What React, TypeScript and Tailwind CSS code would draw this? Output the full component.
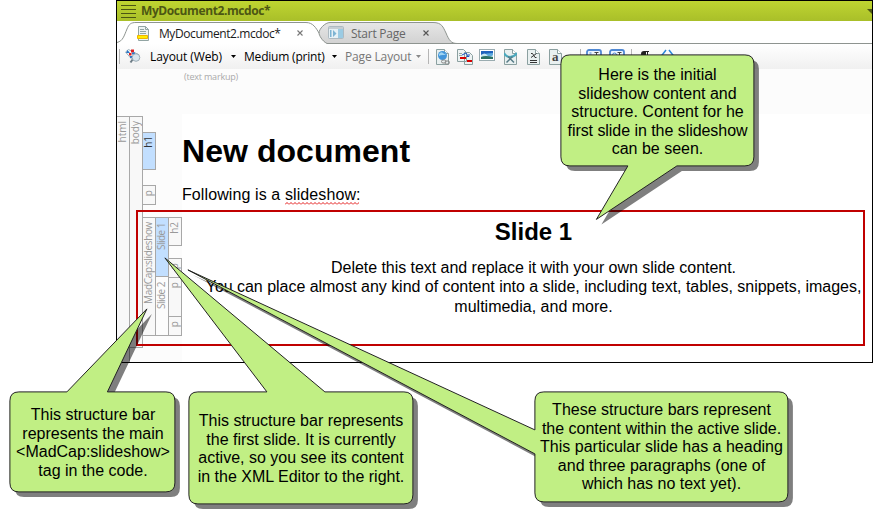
import type { ReactNode } from "react";

const sans = "font-['Liberation_Sans',Arial,sans-serif]";
const ui = "font-['Open_Sans','Noto_Sans',sans-serif]";

function Page({ children }: { children?: ReactNode }) {
  return (
    <>
      <path d="M.5.5h8l4 4v11h-12z" fill="#e9f0f0" stroke="#8ba0a0" />
      <path d="M8.5.5v4h4" fill="#fff" stroke="#8ba0a0" />
      {children}
    </>
  );
}

function Caret({ dim = false }: { dim?: boolean }) {
  return (
    <svg className="shrink-0" width="5" height="3" viewBox="0 0 5 3">
      <path d="M0 0h5L2.5 3z" fill={dim ? "#888" : "#000"} />
    </svg>
  );
}

function Separator() {
  return <div className="h-[15px] w-px shrink-0 bg-[#b5b5b5]" />;
}

function TitleBar() {
  return (
    <div className="flex h-5 shrink-0 items-center bg-linear-to-b from-[#bfd531] to-[#a9bf29]">
      <div className="ml-1 flex w-[15px] flex-col gap-[3px]">
        <div className="h-px bg-[#4c5613]" />
        <div className="h-px bg-[#4c5613]" />
        <div className="h-px bg-[#4c5613]" />
        <div className="h-px bg-[#4c5613]" />
      </div>
      <span className={`${ui} ml-[5px] whitespace-nowrap text-[12px] leading-5 font-bold tracking-[-0.4px] text-[#4c5613]`}>
        MyDocument2.mcdoc*
      </span>
      <svg className="ml-auto" width="5" height="5" viewBox="0 0 5 5">
        <path d="M0 0h5v5z" fill="#4c5613" />
      </svg>
    </div>
  );
}

function TabStrip() {
  return (
    <div className="relative flex h-[23px] shrink-0 items-center bg-white">
      <svg className="absolute top-0 left-0" width="755" height="24" viewBox="0 0 755 24">
        <defs>
          <linearGradient id="idleTab" x1="0" y1="0" x2="0" y2="1">
            <stop offset="0" stopColor="#e6e6e6" />
            <stop offset="1" stopColor="#d2d2d2" />
          </linearGradient>
        </defs>
        <path d="M209.500 22.500C204 19 202 14 202 12C202 8 208 1.500 213 1.500H316C325 1.500 326 6 329 12C332 19 334 22.500 340 22.500z" fill="url(#idleTab)" />
        <path d="M755 22.500H210C205 20 202 14 202 12C202 8 208 1.500 213 1.500H316C325 1.500 326 6 329 12C332 19 334 22.500 340 22.500" fill="none" stroke="#8e9490" />
        <path d="M0 21.500C6 20 7 15 10 8C12 3 14 1.500 19 1.500H189C196 1.500 199 7 202 12" fill="none" stroke="#8e9490" />
      </svg>
      <svg className="relative mt-px ml-5" width="13" height="15" viewBox="0 0 13 15">
        <path d="M1.500.5h7l3 3v11h-10z" fill="#edf3f2" stroke="#92a5a4" />
        <path d="M8.500.5v3h3M3 3.500h4M3 5.500h6M3 7.500h6" fill="none" stroke="#92a5a4" />
        <path d="M.5 9.500h10v3H.5z" fill="#ffed00" stroke="#efb400" />
      </svg>
      <span className={`${ui} relative mt-[3px] ml-[9px] w-[122px] whitespace-nowrap text-[12px] leading-4 tracking-[-0.42px] text-[#1a1a1a]`}>
        MyDocument2.mcdoc*
      </span>
      <svg className="relative mt-px ml-4" width="6" height="6" viewBox="0 0 6 6">
        <path d="M.5.5l5 5M5.500.5l-5 5" stroke="#777" strokeWidth="1.100" />
      </svg>
      <svg className="relative ml-[25px]" width="16" height="13" viewBox="0 0 16 13">
        <rect x=".5" y=".5" width="15" height="12" rx="1" fill="#c5dce9" stroke="#adb9c0" />
        <path d="M1 1h14v2H1z" fill="#c5cdd2" />
        <path d="M1 3h9v9H1z" fill="#e6f1f6" />
        <path d="M2 4h1.500v7H2zM5 4l3.500 3.500L5 11z" fill="#7db4d3" />
        <path d="M10 3h5v9h-5z" fill="#9bcbe3" />
      </svg>
      <span className={`${ui} relative mt-[3px] ml-[7px] w-[55px] whitespace-nowrap text-[12px] leading-4 tracking-[-0.25px] text-[#666]`}>
        Start Page
      </span>
      <svg className="relative mt-px ml-[17px]" width="6" height="6" viewBox="0 0 6 6">
        <path d="M.5.5l5 5M5.500.5l-5 5" stroke="#555" strokeWidth="1.100" />
      </svg>
    </div>
  );
}

function Toolbar() {
  return (
    <div className={`${ui} flex h-[25px] shrink-0 items-center bg-linear-to-b from-white to-[#f0f0f0] text-[12px] leading-4 whitespace-nowrap`}>
      <div className="ml-[2px]">
        <Separator />
      </div>
      <svg className="mb-px ml-[5px]" width="16" height="16" viewBox="0 0 16 16">
        <path d="M.5 4l3-2.500 10 5-7 4.500z" fill="#f3f8fb" stroke="#9fb2bd" />
        <path d="M1 5l1.500-3L5 5z" fill="#2d77c5" />
        <path d="M6 1.500h3v3H6zM4 5h2.500v2.500H4z" fill="#d22" />
        <path d="M7 4.500h3v2H7zM5 8h2v2H5z" fill="#2d77c5" />
        <path d="M8 11l-2.500 3.500" stroke="#6d7c86" strokeWidth="2" />
        <circle cx="11" cy="9.500" r="3.800" fill="#d9e6ee" stroke="#9aabb5" />
      </svg>
      <span className="ml-[9px] w-[72px] tracking-[-0.1px] text-black">Layout (Web)</span>
      <div className="ml-[9px]"><Caret /></div>
      <span className="ml-[8px] w-[82px] tracking-[-0.2px] text-black">Medium (print)</span>
      <div className="ml-[6px]"><Caret /></div>
      <span className="ml-[8px] w-[67px] tracking-[-0.15px] text-[#777]">Page Layout</span>
      <div className="ml-[4px]"><Caret dim /></div>
      <div className="ml-[7px]"><Separator /></div>
      <svg className="ml-[7px]" width="16" height="16" viewBox="0 0 16 16">
        <Page />
        <circle cx="6.500" cy="6.500" r="4.500" fill="#4295da" />
        <path d="M3 5q2-3 4-1t3 0q0 2-3 2t-4 1z" fill="#9ed4f2" />
        <g fill="none" stroke="#888">
          <rect x="5.500" y="11" width="4.500" height="3" rx="1.500" />
          <rect x="9" y="12" width="4.500" height="3" rx="1.500" />
        </g>
      </svg>
      <svg className="ml-[5px]" width="17" height="16" viewBox="0 0 17 16">
        <path d="M.5.5h6l3 3v9h-9zM7.500 3.500h5l3 3v9h-8z" fill="#eef3f3" stroke="#8ba0a0" />
        <path d="M2 4.500h3M2 6.500h3" stroke="#96a8a8" />
        <path d="M3 8h6v2H3zM10 11h5v2h-5z" fill="#d80000" />
        <path d="M5 6l4-2 2 3M9.500 7.500h2.500V5" fill="none" stroke="#1a55c5" />
      </svg>
      <svg className="mb-1 ml-[5px]" width="16" height="12" viewBox="0 0 16 12">
        <rect x=".5" y=".5" width="15" height="11" fill="#fff" stroke="#9aacb0" />
        <path d="M2 2h12v8H2z" fill="#5da9dd" />
        <path d="M2 2h12v2q-6 0-12 2z" fill="#1e62bd" />
        <path d="M2 6q4-3 6 0t6 0v2H2z" fill="#c7e6ef" />
        <path d="M2 8q4-2 12 0v2H2z" fill="#297064" />
      </svg>
      <svg className="ml-[9px]" width="13" height="16" viewBox="0 0 13 16">
        <Page />
        <path d="M0 4q2 4 6 4t7-4" fill="none" stroke="#4aa8bd" strokeWidth="2.200" />
        <path d="M2.500 13.500l6-6M4 7.500l6 6" stroke="#577b87" strokeWidth="1.500" />
      </svg>
      <svg className="ml-[10px]" width="13" height="16" viewBox="0 0 13 16">
        <Page />
        <path d="M4 4.500h1.500l2.500 4h1.500M9.500 4.500L4 8.500M3 11.500h7M3 13.500h7" fill="none" stroke="#333" />
      </svg>
      <svg className="ml-[9px]" width="13" height="16" viewBox="0 0 13 16">
        <Page />
        <text x="3" y="12" fontFamily="Liberation Serif" fontSize="13" fontWeight="bold" fill="#444">a</text>
      </svg>
      <div className="ml-[18px]"><Separator /></div>
      {["a", "b"].map((id) => (
        <svg key={id} className={id === "a" ? "ml-[5px]" : "ml-[7px]"} width="16" height="16" viewBox="0 0 16 16">
          <rect x="1" y="1" width="14" height="14" rx="2" fill="#eef5fe" stroke="#4f88d3" strokeWidth="1.800" />
          {id === "a" ? (
            <path d="M3.500 4h2M3.500 6h2" stroke="#4f88d3" strokeWidth="1.200" />
          ) : (
            <circle cx="5.500" cy="6" r="2" fill="none" stroke="#4f88d3" />
          )}
          <path d="M8.500 3.500h4M10.500 3.500v7" fill="none" stroke="#444" />
        </svg>
      ))}
      <div className="ml-[6px]"><Separator /></div>
      <svg className="ml-[9px]" width="8" height="11" viewBox="0 0 8 11">
        <path d="M8 0H3a3 3 0 0 0 0 6h1v5h1V1h1v10h1V1h1z" fill="#222" />
      </svg>
      <svg className="ml-[11px]" width="15" height="16" viewBox="0 0 15 16">
        <path d="M6 1L1 7.500l5 6.500M9 1l5 6.500L9 14" fill="none" stroke="#2b88d8" strokeWidth="1.500" />
      </svg>
    </div>
  );
}

/* A structure bar: its label reads from the bottom up and sits at the bar's top. */
function Bar({ label, className }: { label: string; className: string }) {
  return (
    <div className={`flex w-[14px] shrink-0 justify-center border border-[#a8a8a8] pr-[2px] ${className}`}>
      <span className="h-fit rotate-180 whitespace-nowrap leading-[11px] [writing-mode:vertical-rl]">{label}</span>
    </div>
  );
}

function StructureBars() {
  return (
    <div className={`${ui} flex w-[65px] shrink-0 bg-[#fcfcfc] pt-[2px] text-[10px] text-[#999]`}>
      <Bar label="html" className="-ml-px border-b-0 bg-[#f8f8f8] pt-1" />
      <Bar label="body" className="-ml-px h-[232px] bg-[#f8f8f8] pt-1" />
      <div className="-ml-px flex flex-col pt-4">
        <Bar label="h1" className="h-[38px] bg-[#c2dfff] pt-[3px] text-[#333]" />
        <Bar label="p" className="mt-[15px] h-5 bg-[#f8f8f8] pt-1" />
        <div className="mt-3 flex">
          <Bar label="MadCap:slideshow" className="h-[119px] bg-[#f8f8f8] pt-1 tracking-[-0.35px]" />
          <div className="-ml-px flex flex-col">
            <Bar label="Slide 1" className="h-[60px] bg-[#c2dfff] pt-[5px] tracking-[-0.5px]" />
            <Bar label="Slide 2" className="-mt-px h-[60px] bg-[#fcfcfc] pt-[5px] tracking-[-0.5px]" />
          </div>
          <div className="-ml-px flex flex-col">
            <Bar label="h2" className="h-[29px] bg-[#f8f8f8] pt-1" />
            <Bar label="p" className="mt-3 h-[20px] bg-[#f8f8f8] pt-1" />
            <Bar label="p" className="-mt-px h-[40px] bg-[#f8f8f8] pt-1" />
            <Bar label="p" className="-mt-px h-5 bg-[#f8f8f8] pt-1" />
          </div>
        </div>
      </div>
    </div>
  );
}

function Document() {
  return (
    <div className={`${sans} flex min-w-0 flex-1 flex-col bg-white text-[16px] leading-[19px] text-black`}>
      <h1 className="mt-[17px] text-[32px] leading-[40px] font-bold tracking-[0.05px] whitespace-nowrap">New document</h1>
      <p className="mt-[14px] tracking-[0.1px]">
        Following is a{" "}
        <span className="relative">
          slideshow
          <svg className="absolute bottom-[-2px] left-0" width="74" height="3" viewBox="0 0 74 3">
            <defs>
              <pattern id="squiggle" width="4" height="3" patternUnits="userSpaceOnUse">
                <path d="M0 2.500L2 .5l2 2" fill="none" stroke="#e00000" strokeWidth=".9" />
              </pattern>
            </defs>
            <rect width="74" height="3" fill="url(#squiggle)" />
          </svg>
        </span>
        :
      </p>
      <div className="mt-[12px] ml-[22px] flex w-[659px] flex-col items-center text-center whitespace-nowrap">
        <h2 className="text-[24px] leading-8 font-bold">Slide 1</h2>
        <p className="mt-[10px] tracking-[-0.04px]">Delete this text and replace it with your own slide content.</p>
        <p className="tracking-[-0.03px]">You can place almost any kind of content into a slide, including text, tables, snippets, images,</p>
        <p className="mt-px">multimedia, and more.</p>
      </div>
    </div>
  );
}

const shapes = [
  "M570.500 55.500H745.500Q754.500 55.500 754.500 64.500V157.500Q754.500 166.500 745.500 166.500H677.500L597 220L628.500 166.500H570.500Q561.500 166.500 561.500 157.500V64.500Q561.500 55.500 570.500 55.500z",
  "M19.500 392.500H67.500L147.500 309.500L108 392.500H166.500Q175.500 392.500 175.500 401.500V483.500Q175.500 492.500 166.500 492.500H19.500Q10.500 492.500 10.500 483.500V401.500Q10.500 392.500 19.500 392.500z",
  "M544.500 392.500H779.500Q788.500 392.500 788.500 401.500V493.500Q788.500 502.500 779.500 502.500H544.500Q535.500 502.500 535.500 493.500V454.500L188.500 270.500L535.500 430.500V401.500Q535.500 392.500 544.500 392.500z",
  "M198.500 392.500H267.500L165.500 258.500L325.500 392.500H404.500Q413.500 392.500 413.500 401.500V495.500Q413.500 504.500 404.500 504.500H198.500Q189.500 504.500 189.500 495.500V401.500Q189.500 392.500 198.500 392.500z",
];

function Notes() {
  return (
    <div className={`${sans} absolute inset-0 text-center text-[16px] leading-[18.500px] whitespace-nowrap text-black`}>
      <svg className="absolute inset-0" width="873" height="519" viewBox="0.6 0.6 873 519">
        {shapes.map((d) => (
          <g key={d}>
            <path d={d} transform="translate(5 5)" fill="#000" fillOpacity=".5" />
            <path d={d} fill="#c1ef84" stroke="#222" />
          </g>
        ))}
      </svg>
      <div className="absolute top-[66px] left-[561px] w-[193px]">
        <p>Here is the initial</p>
        <p>slideshow content and</p>
        <p>structure. Content for he</p>
        <p className="tracking-[-0.05px]">first slide in the slideshow</p>
        <p>can be seen.</p>
      </div>
      <div className="absolute top-[406px] left-[10px] w-[166px]">
        <p>This structure bar</p>
        <p>represents the main</p>
        <p>&lt;MadCap:slideshow&gt;</p>
        <p>tag in the code.</p>
      </div>
      <div className="absolute top-[412px] left-[189px] w-[224px]">
        <p>This structure bar represents</p>
        <p>the first slide. It is currently</p>
        <p>active, so you see its content</p>
        <p>in the XML Editor to the right.</p>
      </div>
      <div className="absolute top-[401px] left-[535px] w-[253px]">
        <p>These structure bars represent</p>
        <p>the content within the active slide.</p>
        <p>This particular slide has a heading</p>
        <p>and three paragraphs (one of</p>
        <p>which has no text yet).</p>
      </div>
    </div>
  );
}

export default function App() {
  return (
    <div className="relative h-[519px] w-[873px] overflow-hidden bg-white pl-[116px]">
      <div className="flex h-[363px] w-[757px] flex-col overflow-hidden border border-black bg-white">
        <TitleBar />
        <TabStrip />
        <Toolbar />
        <div className="h-[45px] shrink-0 bg-[#fcfcfc] pl-[67px]">
          <p className={`${ui} text-[9px] leading-[15px] tracking-[-0.2px] whitespace-nowrap text-[#aaa]`}>(text markup)</p>
        </div>
        <div className="flex min-h-0 flex-1">
          <StructureBars />
          <Document />
        </div>
      </div>
      <div className="absolute top-[210px] left-[136px] h-[136px] w-[729px] border-2 border-[#c00000]" />
      <Notes />
    </div>
  );
}
